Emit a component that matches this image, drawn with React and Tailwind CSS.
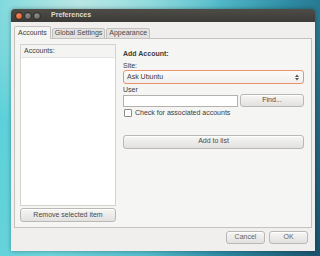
import React from 'react'

const font = { fontFamily: '"Liberation Sans", Arial, sans-serif' }

function GtkButton({ children, className = '' }) {
  return (
    <div
      className={
        'flex items-center justify-center rounded-[3px] border border-[#b9b8b5] bg-[linear-gradient(#f6f6f5,#e2e1df)] text-[7px] text-[#4a4a4a] shadow-[inset_0_1px_0_#fff] ' +
        className
      }
    >
      {children}
    </div>
  )
}

function TitleButton({ color }) {
  return <div className={'h-[8px] w-[8px] rounded-full border border-[#2e2d2a] ' + color} />
}

export default function App() {
  return (
    <div
      style={font}
      className="h-[256px] w-[320px] overflow-hidden bg-[radial-gradient(circle_at_25%_0%,#b9e6e4_0%,transparent_40%),linear-gradient(105deg,#55cfd8_0%,#6fd5dc_30%,#55bccb_55%,#2d8aa2_75%,#1a526c_100%)] pl-[11px] pt-[9px]"
    >
      <div className="flex h-[242px] w-[304px] flex-col overflow-hidden rounded-t-[4px] shadow-[0_0_4px_rgba(0,0,0,0.35)]">
        {/* title bar */}
        <div className="flex h-[13px] items-center gap-[1px] bg-[linear-gradient(#4d4c47,#3c3b37)] pl-[4px]">
          <TitleButton color="bg-[radial-gradient(circle_at_40%_35%,#f7865a,#d9541f)]" />
          <TitleButton color="bg-[radial-gradient(circle_at_40%_35%,#8f8d87,#5e5c57)]" />
          <TitleButton color="bg-[radial-gradient(circle_at_40%_35%,#8f8d87,#5e5c57)]" />
          <span className="ml-[9px] text-[7px] font-bold text-[#dfdbd2]">Preferences</span>
        </div>

        {/* body */}
        <div className="flex flex-1 flex-col bg-[#f0efed] px-[3px] pt-[4px]">
          {/* tabs */}
          <div className="relative z-10 -mb-[1px] flex h-[13px] items-end">
            <div className="flex h-[13px] items-center rounded-t-[2px] border border-b-0 border-[#c3c2bf] bg-[#f5f5f4] px-[3px] text-[7px] text-[#3c3c3c]">
              Accounts
            </div>
            <div className="ml-[1px] flex h-[11px] items-center rounded-t-[2px] border border-[#c3c2bf] bg-[#e3e2e0] px-[2px] text-[7px] text-[#4a4a4a]">
              Global Settings
            </div>
            <div className="ml-[1px] flex h-[11px] items-center rounded-t-[2px] border border-[#c3c2bf] bg-[#e3e2e0] px-[2px] text-[7px] text-[#4a4a4a]">
              Appearance
            </div>
          </div>

          {/* page */}
          <div className="flex h-[190px] w-[298px] border border-[#c3c2bf] bg-[#f5f5f4] pl-[5px] pr-[7px] pt-[5px]">
            {/* left list */}
            <div className="flex w-[96px] flex-col">
              <div className="flex h-[162px] flex-col border border-[#d4d3d0] bg-white">
                <div className="flex h-[13px] items-center border-b border-[#e4e4e2] bg-[#f4f4f3] pl-[3px] text-[7px] text-[#3c3c3c]">
                  Accounts:
                </div>
              </div>
              <GtkButton className="mt-[2px] h-[14px] w-[96px]">Remove selected item</GtkButton>
            </div>

            {/* right form */}
            <div className="ml-[7px] flex flex-1 flex-col pt-[5px]">
              <div className="text-[7px] font-bold leading-[9px] text-[#3c3c3c]">Add Account:</div>
              <div className="mt-[3px] text-[7px] leading-[9px] text-[#3c3c3c]">Site:</div>
              <div className="flex h-[14px] items-center justify-between rounded-[3px] border border-[#ec9270] bg-[linear-gradient(#fbfbfa,#efeeec)] pl-[3px] pr-[4px] text-[7px] text-[#3c3c3c]">
                <span>Ask Ubuntu</span>
                <svg width="4" height="7" viewBox="0 0 4 7" className="text-[#555]">
                  <path d="M0 3 L2 0.5 L4 3 Z M0 4 L2 6.5 L4 4 Z" fill="currentColor" />
                </svg>
              </div>
              <div className="mt-[1px] text-[7px] leading-[9px] text-[#3c3c3c]">User</div>
              <div className="flex items-start gap-[2px]">
                <div className="mt-[1px] h-[12px] w-[115px] border border-[#b3b2af] bg-white" />
                <GtkButton className="h-[13px] flex-1">Find...</GtkButton>
              </div>
              <div className="mt-[1px] flex items-center gap-[3px] pl-[1px]">
                <div className="h-[8px] w-[8px] rounded-[1px] border border-[#8c8b88] bg-white" />
                <span className="text-[7px] text-[#3c3c3c]">Check for associated accounts</span>
              </div>
              <GtkButton className="mt-[16px] h-[14px] w-[181px]">Add to list</GtkButton>
            </div>
          </div>

          {/* dialog buttons */}
          <div className="flex justify-end gap-[4px] pr-[4px] pt-[3px]">
            <GtkButton className="h-[13px] w-[39px] text-[#666]">Cancel</GtkButton>
            <GtkButton className="h-[13px] w-[39px] text-[#666]">OK</GtkButton>
          </div>
        </div>
      </div>
    </div>
  )
}
